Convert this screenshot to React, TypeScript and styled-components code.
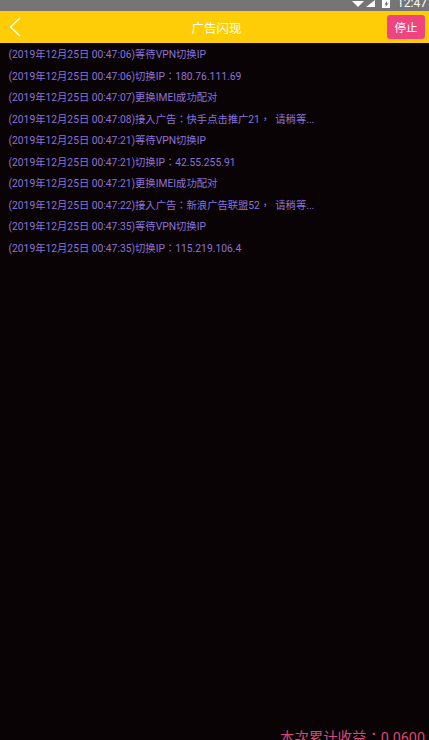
import React from "react";
import styled, { createGlobalStyle } from "styled-components";

const Global = createGlobalStyle`
  html, body { margin: 0; padding: 0; background: #0a0305; }
  body { font-family: Roboto, "Noto Sans CJK TC", sans-serif; }
`;

const Screen = styled.div`
  width: 429px;
  height: 740px;
  overflow: hidden;
  display: flex;
  flex-direction: column;
  background: #0a0305;
`;

const StatusBar = styled.div`
  height: 11px;
  flex: none;
  background: #757575;
  display: flex;
  justify-content: flex-end;
  align-items: flex-end;
  overflow: hidden;
  color: #fff;
  font-size: 12px;
  line-height: 11px;
  padding-right: 2px;
  gap: 4px;
`;

const StatusIcons = styled.svg`
  width: 42px;
  height: 11px;
  display: block;
`;

const Clock = styled.span`
  display: block;
  height: 11px;
  line-height: 7px;
`;

const Header = styled.header`
  height: 32px;
  flex: none;
  background: #fecd07;
  display: grid;
  grid-template-columns: 1fr auto 1fr;
  align-items: center;
`;

const Back = styled.svg`
  width: 14px;
  height: 22px;
  margin-left: 8px;
  display: block;
`;

const Title = styled.h1`
  margin: 0 0 0 4px;
  font-size: 12.5px;
  font-weight: 400;
  color: #fff;
  font-family: "Noto Sans CJK SC", sans-serif;
`;

const Stop = styled.button`
  justify-self: end;
  margin-right: 4px;
  width: 38px;
  height: 24px;
  border: 0;
  padding: 0;
  border-radius: 3px;
  background: #ef4480;
  color: #fff;
  font-size: 11.5px;
  font-family: "Noto Sans CJK SC", sans-serif;
`;

const Log = styled.ul`
  list-style: none;
  margin: 0;
  padding: 1px 0 0 8.5px;
  flex: 1;
  min-height: 0;
  display: flex;
  flex-direction: column;
`;

const Line = styled.li`
  height: 21.5px;
  line-height: 21.5px;
  font-size: 10.3px;
  color: #8a72dc;
  white-space: pre;
`;

const Total = styled.div`
  flex: none;
  height: 11px;
  padding-right: 4px;
  text-align: right;
  color: #dc4679;
  font-size: 14.4px;
  line-height: 19px;
  white-space: nowrap;
  overflow: hidden;
`;

const lines = [
  "(2019年12月25日 00:47:06)等待VPN切换IP",
  "(2019年12月25日 00:47:06)切换IP：180.76.111.69",
  "(2019年12月25日 00:47:07)更换IMEI成功配对",
  "(2019年12月25日 00:47:08)接入广告：快手点击推广21，  请稍等...",
  "(2019年12月25日 00:47:21)等待VPN切换IP",
  "(2019年12月25日 00:47:21)切换IP：42.55.255.91",
  "(2019年12月25日 00:47:21)更换IMEI成功配对",
  "(2019年12月25日 00:47:22)接入广告：新浪广告联盟52，  请稍等...",
  "(2019年12月25日 00:47:35)等待VPN切换IP",
  "(2019年12月25日 00:47:35)切换IP：115.219.106.4",
];

export default function App() {
  return (
    <Screen>
      <Global />
      <StatusBar>
        <StatusIcons viewBox="0 0 42 11">
          <path d="M1 1 H13 L7 7 Z" fill="#fff" />
          <path d="M15 7 L24 0 V7 Z" fill="#fff" />
          <rect x="31" y="0" width="8" height="8" fill="#fff" />
          <path d="M36 1 L33.5 4.5 H35 L34.5 7 L37.5 3.5 H36 Z" fill="#757575" />
        </StatusIcons>
        <Clock>12:47</Clock>
      </StatusBar>
      <Header>
        <Back viewBox="0 0 14 22">
          <path d="M12 2 L2.5 11 L12 20" fill="none" stroke="#fff" strokeWidth="1.3" />
        </Back>
        <Title>广告闪现</Title>
        <Stop>停止</Stop>
      </Header>
      <Log>
        {lines.map((l, i) => (
          <Line key={i}>{l}</Line>
        ))}
      </Log>
      <Total>本次累计收益：0.0600</Total>
    </Screen>
  );
}
